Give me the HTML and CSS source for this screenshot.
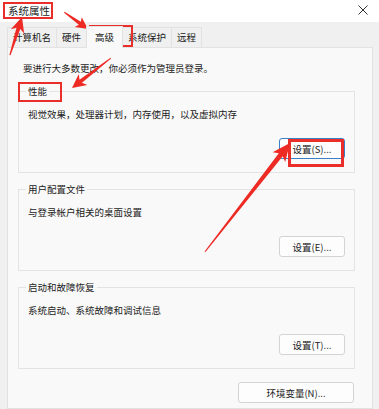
FILE: index.html
```html
<!DOCTYPE html>
<html>
  <head>
    <title>系统属性</title>
    <link rel="stylesheet" href="styles.css">
  </head>
  <body>
    <div class="window">
      <div class="titlebar">
        <span class="title">系统属性</span>
        <svg class="close" width="10" height="10" viewBox="0 0 10 10">
          <path d="M0.5 0.5 L9.5 9.5 M9.5 0.5 L0.5 9.5" stroke="#333" stroke-width="1" fill="none" />
        </svg>
      </div>

      <div class="tabs">
        <div class="tab">计算机名</div>
        <div class="tab">硬件</div>
        <div class="tab active">高级</div>
        <div class="tab">系统保护</div>
        <div class="tab">远程</div>
      </div>

      <div class="panel">
        <p class="note">要进行大多数更改，你必须作为管理员登录。</p>

        <fieldset class="group">
          <legend>性能</legend>
          <p class="desc">视觉效果，处理器计划，内存使用，以及虚拟内存</p>
          <div class="btn-row"><button class="btn focused">设置(S)...</button></div>
        </fieldset>

        <fieldset class="group">
          <legend>用户配置文件</legend>
          <p class="desc">与登录帐户相关的桌面设置</p>
          <div class="btn-row"><button class="btn">设置(E)...</button></div>
        </fieldset>

        <fieldset class="group">
          <legend>启动和故障恢复</legend>
          <p class="desc">系统启动、系统故障和调试信息</p>
          <div class="btn-row"><button class="btn">设置(T)...</button></div>
        </fieldset>

        <div class="env-row"><button class="btn wide">环境变量(N)...</button></div>
      </div>
    </div>

    <!-- annotation overlay -->
    <div class="mark mark-title"></div>
    <div class="mark mark-tab"></div>
    <div class="mark mark-perf"></div>
    <div class="mark mark-btn"></div>

    <svg class="arrows" width="379" height="409" viewBox="0 0 379 409">
      <g fill="#ee2a24">
        <g transform="translate(22 17) rotate(-72.5)">
          <polygon points="0,0 -15,-7 -12,-2 -40,-0.6 -40,0.6 -12,2 -15,7" />
        </g>
        <g transform="translate(88 29) rotate(35.3)">
          <polygon points="0,0 -12,-6 -10,-1.8 -29,-0.5 -29,0.5 -10,1.8 -12,6" />
        </g>
        <g transform="translate(72 88) rotate(142.4)">
          <polygon points="0,0 -14,-7 -11,-2 -49,-0.5 -49,0.5 -11,2 -14,7" />
        </g>
        <g transform="translate(290 143) rotate(-52)">
          <polygon points="0,0 -18,-8 -15,-2.5 -138,-0.6 -138,0.6 -15,2.5 -18,8" />
        </g>
      </g>
    </svg>
  </body>
</html>
```

FILE: styles.css
```css
body {
  margin: 0;
  width: 379px;
  height: 409px;
  overflow: hidden;
  position: relative;
  background-color: #f0f0f0;
  font-family: "Noto Sans CJK SC", "Noto Sans", sans-serif;
  font-size: 9.5px;
  color: #1b1b1b;
}

.titlebar {
  height: 22px;
  background-color: #ffffff;
  display: flex;
  align-items: center;
  justify-content: space-between;
  padding: 0 8px 2px 8px;
  box-sizing: border-box;
}

.title {
  font-size: 10.5px;
}

.close {
  margin-right: 3px;
}

.tabs {
  display: flex;
  align-items: flex-end;
  height: 25px;
  padding-left: 7px;
}

.tab {
  height: 19px;
  line-height: 19px;
  padding: 0 5px;
  border: 1px solid #e2e2e2;
  border-bottom: none;
  margin-right: -1px;
  background-color: #f0f0f0;
}

.tab.active {
  height: 21px;
  line-height: 21px;
  padding: 0 8px;
  background-color: #f9f9f9;
  position: relative;
  z-index: 1;
  margin-bottom: -1px;
}

.panel {
  margin: 0 6px 0 7px;
  height: 362px;
  box-sizing: border-box;
  border: 1px solid #e2e2e2;
  background-color: #f9f9f9;
  padding: 13px 10px 0 10px;
}

.note {
  margin: 0 0 0 5px;
  line-height: 14px;
}

.group {
  margin: 9px 7px 0 0;
  padding: 0 9px 13px 9px;
  border: 1px solid #e3e3e3;
}

.group legend {
  padding: 0 2px;
  margin-left: -2px;
  line-height: 14px;
}

.desc {
  margin: 9px 0 0 0;
  line-height: 14px;
}

.btn-row {
  display: flex;
  justify-content: flex-end;
  margin-top: 17px;
}

.btn {
  width: 66px;
  height: 21px;
  padding: 0;
  font-family: inherit;
  font-size: 9.5px;
  color: #1b1b1b;
  background-color: #fdfdfd;
  border: 1px solid #d3d3d3;
  border-radius: 3px;
}

.btn.focused {
  border-color: #3b7fc4;
}

.btn.wide {
  width: 116px;
}

.env-row {
  display: flex;
  justify-content: flex-end;
  margin: 13px 8px 0 0;
}

.mark {
  position: absolute;
  border: 2px solid #ea2f2b;
  box-sizing: border-box;
}

.mark-title {
  left: 3px;
  top: 2px;
  width: 50px;
  height: 17px;
}

.mark-tab {
  left: 89px;
  top: 25px;
  width: 44px;
  height: 22px;
}

.mark-perf {
  left: 18px;
  top: 82px;
  width: 44px;
  height: 20px;
}

.mark-btn {
  left: 288px;
  top: 139px;
  width: 56px;
  height: 28px;
  border-width: 3px;
}

.arrows {
  position: absolute;
  left: 0;
  top: 0;
}
```
